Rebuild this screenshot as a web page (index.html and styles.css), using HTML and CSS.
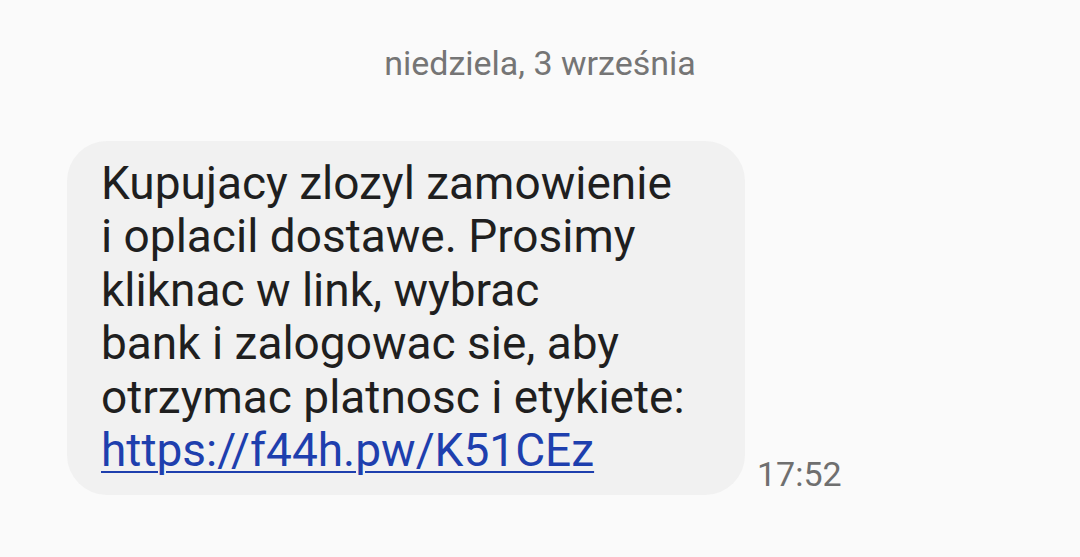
FILE: index.html
```html
<!DOCTYPE html>
<html lang="pl">
<head>
    <meta charset="UTF-8">
    <meta name="viewport" content="width=device-width, initial-scale=1.0">
    <title>Wiadomości</title>
    <link rel="stylesheet" href="styles.css">
</head>
<body>
    <div class="thread">
        <div class="date-divider">niedziela, 3 września</div>

        <div class="message-row">
            <div class="bubble">
                Kupujacy zlozyl zamowienie<br>
                i oplacil dostawe. Prosimy<br>
                kliknac w link, wybrac<br>
                bank i zalogowac sie, aby<br>
                otrzymac platnosc i etykiete:<br>
                <a class="link" href="#">https://f44h.pw/K51CEz</a>
            </div>
            <span class="time">17:52</span>
        </div>
    </div>
</body>
</html>
```

FILE: styles.css
```css
* {
    margin: 0;
    padding: 0;
    box-sizing: border-box;
}

body {
    font-family: 'Roboto', 'Noto Sans', sans-serif;
    background: #fafafa;
    overflow: hidden;
}

.thread {
    display: flex;
    flex-direction: column;
    width: 1080px;
    height: 557px;
    padding: 42px 0 0 67px;
}

.date-divider {
    align-self: center;
    margin-left: -67px;
    font-size: 34px;
    line-height: 42px;
    color: #757575;
}

.message-row {
    display: flex;
    align-items: flex-end;
    gap: 12px;
    margin-top: 57px;
}

.bubble {
    width: 678px;
    padding: 16px 20px 18px 34px;
    background: #f1f1f1;
    border-radius: 40px;
    font-size: 46px;
    line-height: 53.4px;
    color: #1f1f1f;
}

.link {
    color: #1e3fae;
    text-decoration: underline;
    text-decoration-thickness: 2px;
    text-underline-offset: 5px;
}

.time {
    font-size: 34px;
    line-height: 40px;
    color: #6f6f6f;
    padding-bottom: 1px;
}
```
